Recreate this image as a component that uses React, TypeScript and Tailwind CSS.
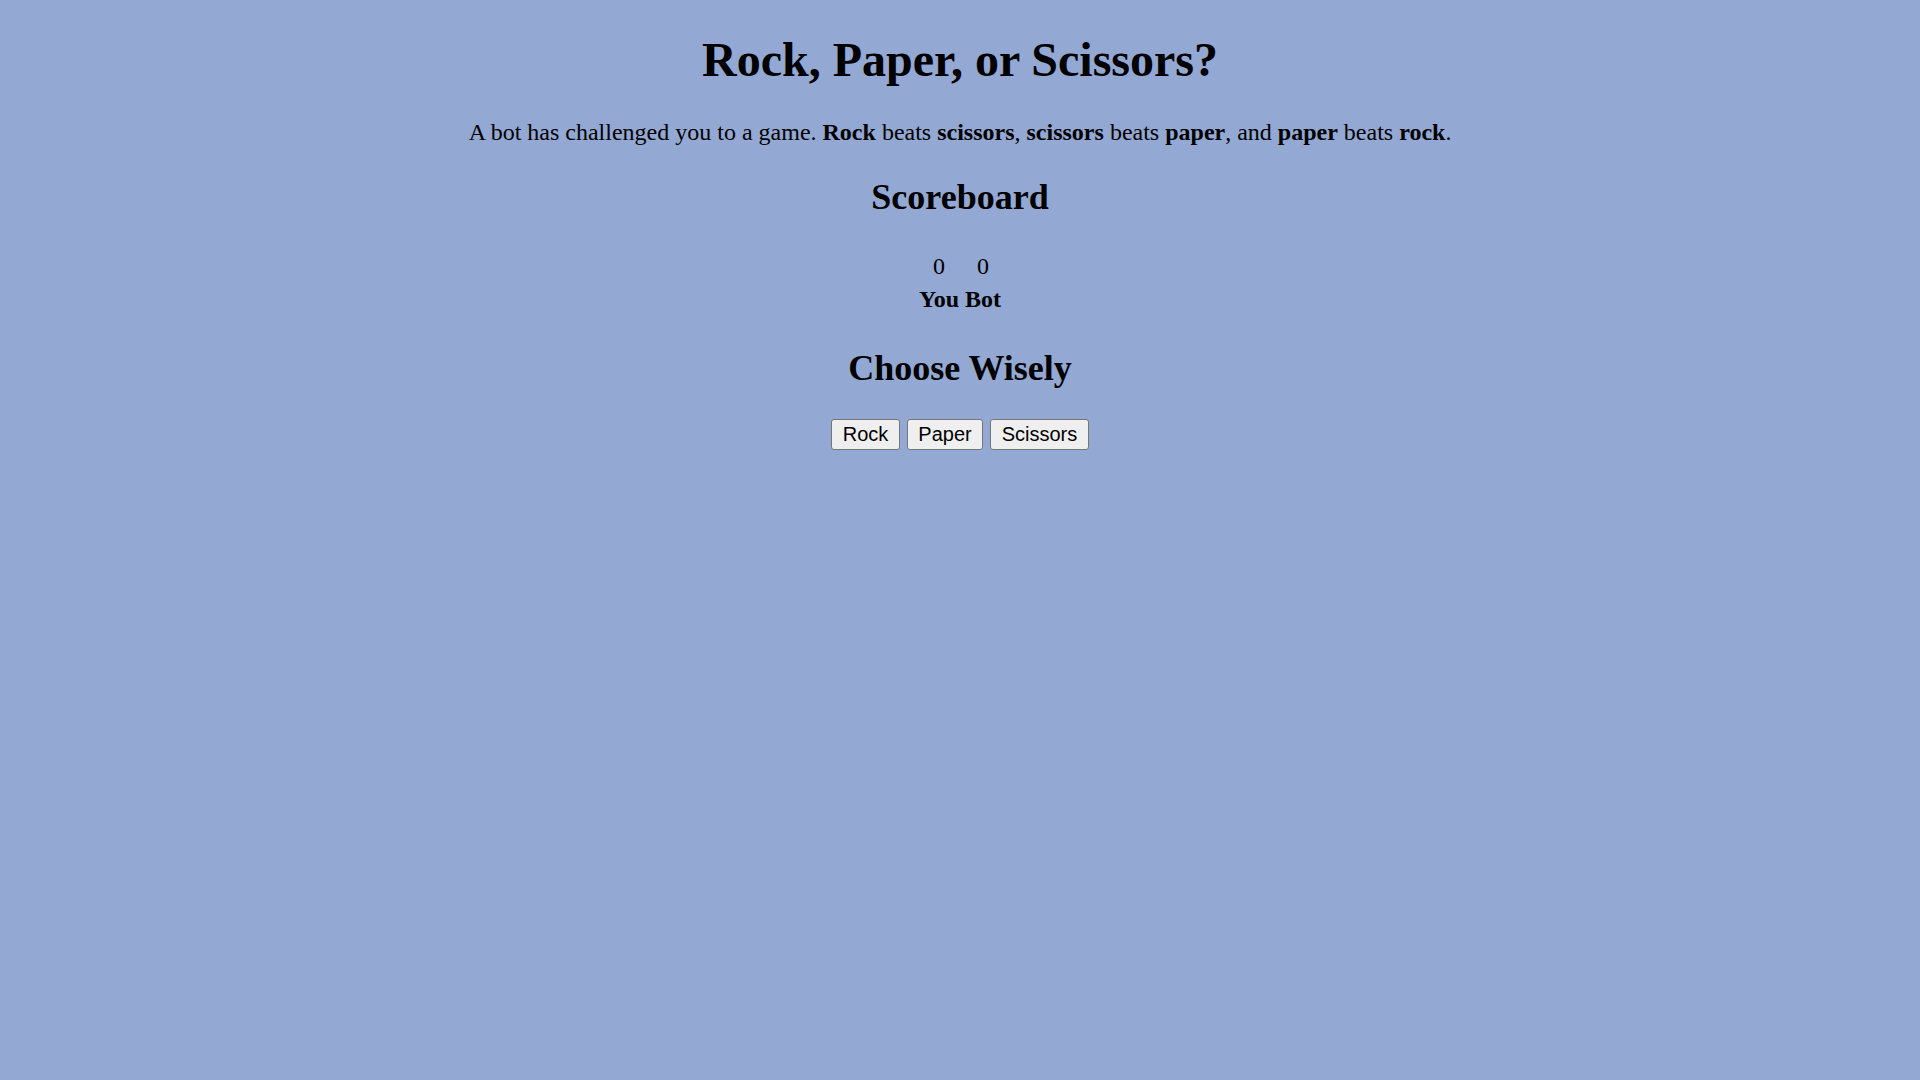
import { useState } from "react";

type Choice = "Rock" | "Paper" | "Scissors";

const choices: Choice[] = ["Rock", "Paper", "Scissors"];

const beats: Record<Choice, Choice> = {
  Rock: "Scissors",
  Paper: "Rock",
  Scissors: "Paper",
};

export default function App() {
  const [you, setYou] = useState(0);
  const [bot, setBot] = useState(0);

  const play = (choice: Choice) => {
    const pick = choices[Math.floor(Math.random() * choices.length)];
    if (pick === choice) return;
    if (beats[choice] === pick) setYou((n) => n + 1);
    else setBot((n) => n + 1);
  };

  return (
    <div className="min-h-screen flow-root bg-[#93a8d2] text-black">
      <div className="m-[12px] text-center font-['Liberation_Serif','Times_New_Roman',serif] text-[24px] leading-[normal]">
        <h1 className="my-[32px] text-[48px] font-bold">Rock, Paper, or Scissors?</h1>
        <p className="my-[24px]">
          A bot has challenged you to a game. <b>Rock</b> beats <b>scissors</b>, <b>scissors</b> beats{" "}
          <b>paper</b>, and <b>paper</b> beats <b>rock</b>.
        </p>
        <h2 className="my-[30px] text-[36px] font-bold">Scoreboard</h2>
        <table className="mx-auto border-separate border-spacing-[3px]">
          <tbody>
            <tr>
              <td className="p-[1.5px]">{you}</td>
              <td className="p-[1.5px]">{bot}</td>
            </tr>
            <tr>
              <th className="p-[1.5px] font-bold">You</th>
              <th className="p-[1.5px] font-bold">Bot</th>
            </tr>
          </tbody>
        </table>
        <h2 className="my-[30px] text-[36px] font-bold">Choose Wisely</h2>
        <div className="flex justify-center gap-[7px]">
          {choices.map((c) => (
            <button
              key={c}
              type="button"
              onClick={() => play(c)}
              className="h-[31px] rounded-[3px] border-[1.5px] border-solid border-[#767676] bg-[#efefef] px-[10.5px] font-['Liberation_Sans',Arial,sans-serif] text-[20px] leading-[normal] text-black"
            >
              {c}
            </button>
          ))}
        </div>
      </div>
    </div>
  );
}
